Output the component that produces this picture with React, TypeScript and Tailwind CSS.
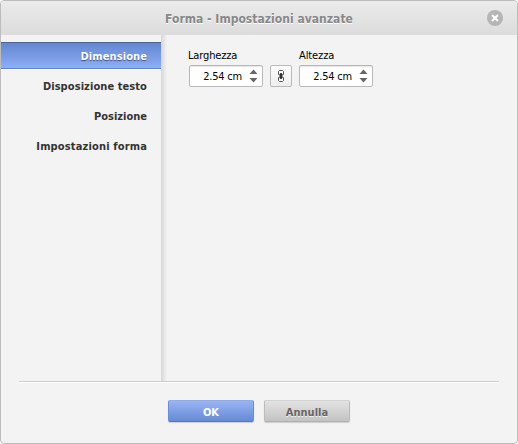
const items = [
  { label: 'Disposizione testo', tracking: 'tracking-[0.08px]' },
  { label: 'Posizione', tracking: 'tracking-[0px]' },
  { label: 'Impostazioni forma', tracking: 'tracking-[0.15px]' },
];

function Field({ label, className }: { label: string; className: string }) {
  return (
    <div className="flex w-[76px] flex-col">
      <label className={`h-4 text-[11px] leading-4 whitespace-nowrap text-black ${className}`}>{label}</label>
      <div className="mt-px ml-px flex h-[22px] w-[74px] items-center rounded-[2px] border border-[#b9b9b9] bg-white shadow-[inset_0_1px_1px_#e5e5e5]">
        <span className="flex-1 pt-[2px] text-right text-[11px] leading-[18px] tracking-[-0.2px] whitespace-nowrap text-black">2.54 cm</span>
        <svg className="mr-[4px] ml-[7px] shrink-0" width="9" height="14" viewBox="0 0 9 14" fill="#666">
          <path d="M4.5 0.5 8.5 5h-8zM0.5 9h8l-4 4.5z" />
        </svg>
      </div>
    </div>
  );
}

export default function App() {
  return (
    <div className="h-[444px] w-[518px] bg-white font-['DejaVu_Sans_Condensed','DejaVu_Sans',sans-serif] font-stretch-condensed">
      <div className="flex h-[444px] flex-col overflow-hidden rounded-[4px] border border-[#bcbcbc] bg-[#f3f3f3]">
        <header className="grid h-[34px] shrink-0 grid-cols-[30px_1fr_30px] items-center bg-linear-to-b from-[#ebebeb] to-[#dcdcdc]">
          <h1 className="col-start-2 pt-[2px] text-center text-[12px] font-bold tracking-[0.02px] text-[#888] [text-shadow:0_1px_0_#fff]">Forma - Impostazioni avanzate</h1>
          <svg width="16" height="16" viewBox="0 0 16 16">
            <circle cx="8" cy="8" r="8" fill="#b5b5b5" />
            <path d="m5 5 6 6m0-6-6 6" stroke="#fff" strokeWidth="2" />
          </svg>
        </header>
        <div className="flex h-[346px] shrink-0">
          <nav className="w-[160px] shrink-0 pt-[7px] text-right text-[11px] font-bold text-[#333]">
            <div className="h-[27px] border-t border-b border-t-[#4a629b] border-b-[#6583c2] bg-linear-to-b from-[#6486d1] to-[#8eaef5] pr-[14px] leading-[28px] tracking-[0.1px] text-white shadow-[0_1px_0_#fff] [text-shadow:0_1px_1px_#3a5080]">Dimensione</div>
            <div className="pt-[3px]">
              {items.map((item) => (
                <div key={item.label} className={`h-[30px] pr-[14px] leading-[30px] whitespace-nowrap ${item.tracking}`}>{item.label}</div>
              ))}
            </div>
          </nav>
          <div className="w-[6px] shrink-0 bg-linear-to-r from-[#d7d7d7] to-[#f3f3f3]" />
          <main className="flex items-start pt-[13px] pl-[21px]">
            <Field label="Larghezza" className="tracking-[-0.15px]" />
            <button className="mt-[17px] mr-[6px] ml-[6px] flex h-[22px] w-[22px] items-center justify-center rounded-[2px] border border-[#b9b9b9] bg-linear-to-b from-white to-[#eee]">
              <svg width="8" height="14" viewBox="0 0 8 14" fill="none" stroke="#555">
                <path d="M1.5 5.5v-3l1-1h3l1 1v3M1.5 8.5v3l1 1h3l1-1v-3M1.5 5.5h1M5.5 5.5h1M1.5 8.5h1M5.5 8.5h1" />
                <path d="M4 4v6" stroke="#444" strokeWidth="2" />
                <path d="M2.5 5h3v4h-3z" fill="#333" stroke="none" />
              </svg>
            </button>
            <Field label="Altezza" className="pl-px tracking-[-0.1px]" />
          </main>
        </div>
        <div className="mx-[18px] h-[2px] shrink-0 border-t border-b border-t-[#ccc] border-b-white" />
        <footer className="flex justify-center gap-[10px] pt-[17px] text-[11px] font-bold">
          <button className="h-[22px] w-[86px] rounded-[2px] border border-t-[#91abe8] border-r-[#6f8dce] border-b-[#5878bc] border-l-[#6f8dce] bg-linear-to-b from-[#98b4f4] to-[#678ad5] pt-[4px] leading-[16px] text-white shadow-[0_1px_1px_#ccc]">OK</button>
          <button className="h-[22px] w-[86px] rounded-[2px] border border-t-[#d1d1d1] border-r-[#bbb] border-b-[#b1b1b1] border-l-[#bbb] bg-linear-to-b from-[#e3e3e3] to-[#c3c3c3] pt-[4px] leading-[16px] text-[#666] shadow-[0_1px_1px_#ccc] [text-shadow:0_1px_0_#eee]">Annulla</button>
        </footer>
      </div>
    </div>
  );
}
